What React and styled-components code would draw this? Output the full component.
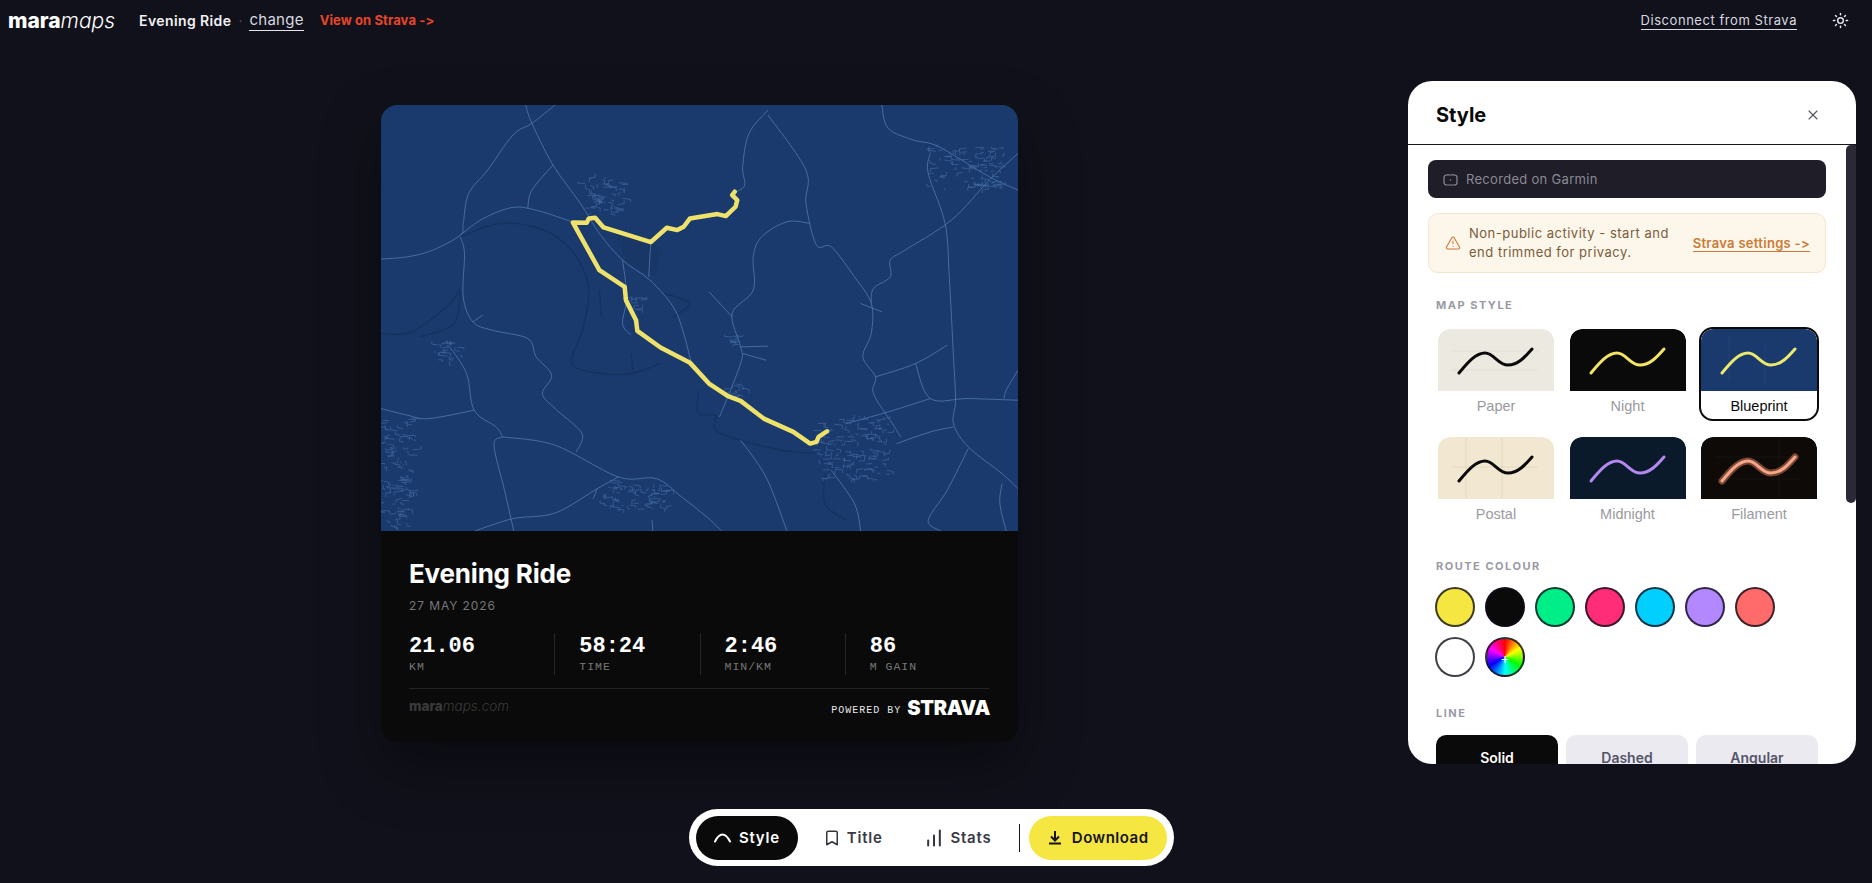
import React from "react";
import styled, { createGlobalStyle } from "styled-components";
import { Sun, X, Bookmark, ChartNoAxesColumnIncreasing, TriangleAlert } from "lucide-react";

const GlobalStyle = createGlobalStyle`
  html, body {
    margin: 0;
    background: #10111a;
    font-family: Inter, "Noto Sans", sans-serif;
    font-feature-settings: "liga" 0, "calt" 0;
  }
  * { box-sizing: border-box; }
`;

// map drawing, coordinates traced off the reference
const ROADS = [
  "370,45 385,100 435,225 500,340 545,430 600,510 665,570 720,650 745,730 765,830",
  "440,45 385,100 340,135 280,240 235,310 222,400 215,435 150,480 90,500 27,507",
  "215,435 270,385 340,352 400,362 480,395",
  "435,225 385,300 375,355",
  "215,440 225,490 222,620 245,695 290,720 375,745 395,800 432,855 410,910 440,955 495,1015 505,1045 490,1085",
  "245,695 268,675",
  "190,770 230,850 248,960 300,1010 315,1040",
  "27,955 90,975 140,985 248,960",
  "315,1040 295,1065 320,1200 342,1322",
  "315,1040 440,1065 590,1160 680,1165 740,1220 800,1280 835,1322",
  "250,1322 340,1285 440,1268 540,1195 590,1160",
  "945,60 900,130 885,230 890,285 870,305",
  "945,75 1035,240 1035,340 1060,465 1095,470 1150,560 1190,640 1190,730 1170,800 1200,860 1195,910 1240,1000 1260,1040",
  "1215,45 1230,115 1290,150 1350,170 1470,260 1538,300",
  "1538,190 1470,270 1380,390 1270,480 1235,510 1235,560 1195,595 1190,640",
  "1330,190 1325,250 1365,400 1375,560 1385,800 1390,930 1385,1000 1420,1070 1500,1150 1538,1195",
  "1045,400 990,395 930,440 910,500 910,600 860,670 880,770 880,820 830,980",
  "805,605 860,680",
  "1200,860 1295,820 1370,765",
  "1295,820 1330,925 1420,925 1538,930",
  "1130,1000 1230,965 1330,925",
  "1420,1075 1370,1200 1325,1290 1355,1322",
  "1500,1180 1495,1240 1510,1322",
  "1250,1060 1330,1025 1385,1010",
  "1095,1140 1150,1240 1165,1322",
  "880,1050 940,1160 990,1322",
  "667,456 662,560",
  "600,510 610,620 600,700 620,735",
  "880,770 945,768",
  "885,790 940,810",
  "1538,840 1510,900 1505,925",
  "1165,640 1215,665",
  "540,1195 530,1225",
  "670,1290 672,1322",
];

const RIVERS = [
  "27,730 100,725 190,640 215,590",
  "120,740 200,700 215,600",
  "215,440 290,405 350,400 430,430 490,500 520,600 505,720 480,820 550,850 620,850 690,820",
  "620,790 625,840",
  "780,900 780,970 820,975 820,1020 880,1050 980,1080 1060,1090",
  "1080,1150 1080,1240 1130,1290",
  "545,600 550,680",
  "700,610 760,640 720,680",
];

const VILLAGES = [
  [1330, 170, 170, 130],
  [30, 980, 75, 340],
  [1070, 980, 160, 190],
  [550, 1170, 170, 90],
  [510, 260, 95, 120],
  [155, 755, 60, 60],
  [605, 620, 45, 40],
  [850, 880, 35, 40],
  [855, 735, 25, 30],
];

// catmull-rom through the traced points so the roads bend instead of kinking
const smooth = (str) => {
  const pts = str.split(" ").map((p) => p.split(",").map(Number));
  let d = `M${pts[0][0]} ${pts[0][1]}`;
  for (let i = 0; i < pts.length - 1; i++) {
    const a = pts[i - 1] || pts[i];
    const b = pts[i];
    const c = pts[i + 1];
    const e = pts[i + 2] || c;
    const c1 = [b[0] + (c[0] - a[0]) / 6, b[1] + (c[1] - a[1]) / 6];
    const c2 = [c[0] - (e[0] - b[0]) / 6, c[1] - (e[1] - b[1]) / 6];
    d += `C${c1[0]} ${c1[1]} ${c2[0]} ${c2[1]} ${c[0]} ${c[1]}`;
  }
  return d;
};

// small street blobs, seeded so every run draws the same
const makeStreets = () => {
  let seed = 7;
  const rnd = () => {
    seed = (seed * 16807) % 2147483647;
    return seed / 2147483647;
  };
  const out = [];
  VILLAGES.forEach(([x, y, w, h]) => {
    const count = Math.round((w * h) / 240) + 8;
    for (let i = 0; i < count; i++) {
      const px = x + rnd() * w;
      const py = y + rnd() * h;
      const dx = (rnd() - 0.5) * 40;
      const dy = (rnd() - 0.5) * 30;
      out.push(`${px},${py} ${px + dx},${py + dy * 0.2} ${px + dx},${py + dy}`);
    }
  });
  return out;
};
const STREETS = makeStreets();

const ROUTE =
  "866,305 860,315 872,330 868,350 845,378 825,372 760,385 745,410 730,420 705,413 667,456 555,412 535,383 520,385 515,398 482,397 545,540 605,590 608,630 632,690 635,722 690,772 760,818 805,880 850,918 880,932 935,985 1005,1025 1045,1060 1060,1055 1065,1040 1085,1023";

const MAP_STYLES = [
  { name: "Paper", bg: "#ece9e1", line: "#0a0a0a", grid: "M14 22H100M14 41H100", gridColor: "rgba(0,0,0,.05)" },
  { name: "Night", bg: "#0a0a0a", line: "#f2e566" },
  { name: "Blueprint", bg: "#1a3a6e", line: "#ecea6c", grid: "M28 8V50M64 16V56", gridColor: "rgba(255,255,255,.06)", active: true },
  { name: "Postal", bg: "#f2e8d2", line: "#0a0a0a", grid: "M28 0V62M64 0V62M14 30H100", gridColor: "rgba(120,90,40,.12)" },
  { name: "Midnight", bg: "#0b1a2b", line: "#b388f0" },
  { name: "Filament", bg: "#0e0a08", line: "#f3a88c", glow: "#7d4632", grid: "M14 20H100M14 42H100M78 0V62", gridColor: "rgba(255,255,255,.05)" },
];

const COLOURS = ["#f5e642", "#0a0a0a", "#00ee88", "#ff2d78", "#00cfff", "#b388ff", "#ff6b6b", "#ffffff"];

const STATS = [
  ["21.06", "KM"],
  ["58:24", "TIME"],
  ["2:46", "MIN/KM"],
  ["86", "M GAIN"],
];

const CURVE = "M21 44C30 33 38 24 47 24C56 24 60 36 70 36C80 36 87 28 94 20";

export default function App() {
  return (
    <Page>
      <GlobalStyle />
      <TopBar>
        <TopGroup>
          <Logo>
            <b>mara</b>
            <i>maps</i>
          </Logo>
          <ActivityName>Evening Ride</ActivityName>
          <Dot>·</Dot>
          <ChangeLink>change</ChangeLink>
          <StravaLink>View on Strava -&gt;</StravaLink>
        </TopGroup>
        <TopRight>
          <DisconnectLink>Disconnect from Strava</DisconnectLink>
          <Sun size={17} strokeWidth={2} color="#e8e8ee" />
        </TopRight>
      </TopBar>

      <Workspace>
        <Card>
          <MapArea viewBox="27 45 1511 1277" preserveAspectRatio="none">
            <polygon points="585,430 690,470 680,560 610,520" fill="#183666" />
            {RIVERS.map((p, i) => (
              <path key={i} d={smooth(p)} fill="none" stroke="#16325f" strokeWidth="1.5" />
            ))}
            {ROADS.map((p, i) => (
              <path key={i} d={smooth(p)} fill="none" stroke="#5079ae" strokeWidth="0.8" />
            ))}
            {STREETS.map((p, i) => (
              <polyline key={i} points={p} fill="none" stroke="#446ba2" strokeWidth="0.6" />
            ))}
            <polyline
              points={ROUTE}
              fill="none"
              stroke="#efe26a"
              strokeWidth="4.5"
              strokeLinejoin="round"
              strokeLinecap="round"
            />
          </MapArea>
          <CardInfo>
            <CardTitle>Evening Ride</CardTitle>
            <CardDate>27 MAY 2026</CardDate>
            <StatGrid>
              {STATS.map(([value, label]) => (
                <Stat key={label}>
                  <StatValue>{value}</StatValue>
                  <StatLabel>{label}</StatLabel>
                </Stat>
              ))}
            </StatGrid>
            <CardFooter>
              <Credit>
                <b>mara</b>
                <i>maps.com</i>
              </Credit>
              <Powered>
                <PoweredText>POWERED BY</PoweredText>
                <StravaMark>STRAVA</StravaMark>
              </Powered>
            </CardFooter>
          </CardInfo>
        </Card>

        <Panel>
          <PanelHeader>
            <PanelTitle>Style</PanelTitle>
            <X size={16} strokeWidth={1.6} color="#55555f" />
          </PanelHeader>
          <PanelBody>
            <PanelContent>
              <DeviceBar>
                <svg width="15" height="13" viewBox="0 0 15 13" fill="none" stroke="#8a8a94" strokeWidth="1.2">
                  <rect x="1" y="2" width="13" height="10" rx="2.5" />
                  <path d="M5 2V1M10 2V1" />
                  <circle cx="7.5" cy="7" r="0.8" fill="#8a8a94" stroke="none" />
                </svg>
                Recorded on Garmin
              </DeviceBar>
              <Notice>
                <TriangleAlert size={16} strokeWidth={1.6} color="#d0763a" />
                <NoticeText>
                  Non-public activity - start and
                  <br />
                  end trimmed for privacy.
                </NoticeText>
                <NoticeLink>Strava settings -&gt;</NoticeLink>
              </Notice>

              <SectionLabel $top={22}>MAP STYLE</SectionLabel>
              <StyleGrid>
                {MAP_STYLES.map((s) => (
                  <StyleCard key={s.name} $active={s.active}>
                    <Thumb viewBox="0 0 116 62" style={{ background: s.bg }}>
                      {s.grid && <path d={s.grid} stroke={s.gridColor} strokeWidth="0.8" />}
                      {s.glow && <path d={CURVE} fill="none" stroke={s.glow} strokeWidth="7" strokeLinecap="round" />}
                      <path d={CURVE} fill="none" stroke={s.line} strokeWidth="3" strokeLinecap="round" />
                    </Thumb>
                    <StyleName $active={s.active}>{s.name}</StyleName>
                  </StyleCard>
                ))}
              </StyleGrid>

              <SectionLabel $top={27}>ROUTE COLOUR</SectionLabel>
              <Swatches>
                {COLOURS.map((c) => (
                  <Swatch key={c} style={{ background: c }} />
                ))}
                <CustomSwatch>+</CustomSwatch>
              </Swatches>

              <SectionLabel $top={26}>LINE</SectionLabel>
              <LineRow>
                <LineButton $active>Solid</LineButton>
                <LineButton>Dashed</LineButton>
                <LineButton>Angular</LineButton>
              </LineRow>
            </PanelContent>
            <ScrollThumb />
          </PanelBody>
        </Panel>
      </Workspace>

      <ToolbarRow>
        <Toolbar>
          <ToolButton $active $left={18} $right={18}>
            <svg width="17" height="10" viewBox="0 0 17 10" fill="none" stroke="#fff" strokeWidth="2" strokeLinecap="round">
              <path d="M1 8.500C3.500 3.500 6 1.500 8.500 1.500C11 1.500 13.500 3.500 16 8.500" />
            </svg>
            Style
          </ToolButton>
          <ToolButton $left={25} $right={20} $gap={6}>
            <Bookmark size={18} strokeWidth={2} color="#33333d" />
            Title
          </ToolButton>
          <ToolButton $left={21} $right={20} $gap={7}>
            <ChartNoAxesColumnIncreasing size={20} strokeWidth={2.4} color="#33333d" />
            Stats
          </ToolButton>
          <ToolDivider />
          <DownloadButton>
            <svg width="14" height="15" viewBox="0 0 14 15" fill="none" stroke="#15151a" strokeWidth="2">
              <path d="M7 1V10M3 6.500L7 10.500L11 6.500M1 13.500H13" />
            </svg>
            Download
          </DownloadButton>
        </Toolbar>
      </ToolbarRow>
    </Page>
  );
}

const Page = styled.div`
  width: 100%;
  height: 883px;
  overflow: hidden;
  background: #10111a;
  display: flex;
  flex-direction: column;
`;

const TopBar = styled.header`
  height: 40px;
  flex: none;
  display: flex;
  align-items: center;
  justify-content: space-between;
  padding: 0 23px 0 8px;
`;

const TopGroup = styled.div`
  display: flex;
  align-items: center;
`;

const Logo = styled.div`
  font-size: 21px;
  color: #fff;
  width: 131px;
  letter-spacing: 0;
  b {
    font-weight: 800;
  }
  i {
    font-weight: 300;
  }
`;

const ActivityName = styled.span`
  font-size: 14px;
  font-weight: 600;
  color: #f0f0f4;
  letter-spacing: 0.4px;
`;

const Dot = styled.span`
  color: #55555f;
  font-size: 14px;
  margin: 0 7px;
`;

const ChangeLink = styled.a`
  font-size: 15px;
  color: #d8d8e0;
  letter-spacing: 0.25px;
  border-bottom: 1px solid #e4e4ea;
  padding-bottom: 1px;
  margin-right: 16px;
  margin-top: 1px;
`;

const StravaLink = styled.a`
  font-size: 13px;
  font-weight: 700;
  color: #e8452a;
  letter-spacing: 0.1px;
`;

const TopRight = styled.div`
  display: flex;
  align-items: center;
  gap: 35px;
`;

const DisconnectLink = styled.a`
  font-size: 13px;
  color: #d8d8e0;
  letter-spacing: 0.55px;
  border-bottom: 1px solid #d8d8e0;
  padding-bottom: 1px;
  margin-top: 1px;
`;

const Workspace = styled.main`
  height: 769px;
  flex: none;
  display: flex;
  align-items: flex-start;
  justify-content: space-between;
  padding: 0 16px 0 381px;
`;

const Card = styled.section`
  width: 637px;
  height: 637px;
  margin-top: 65px;
  border-radius: 16px;
  overflow: hidden;
  background: #0a0a0a;
  box-shadow: 0 24px 60px rgba(0, 0, 0, 0.35);
  display: flex;
  flex-direction: column;
`;

const MapArea = styled.svg`
  display: block;
  width: 100%;
  height: 426px;
  flex: none;
  background: #1a3a6e;
  path,
  polyline {
    vector-effect: non-scaling-stroke;
  }
`;

const CardInfo = styled.div`
  flex: 1;
  padding: 26px 28px 0;
  display: flex;
  flex-direction: column;
`;

const CardTitle = styled.h2`
  margin: 0;
  font-size: 26px;
  line-height: 34px;
  font-weight: 700;
  color: #fff;
  letter-spacing: -0.2px;
`;

const CardDate = styled.div`
  margin-top: 7px;
  font-size: 12px;
  line-height: 16px;
  color: #777;
  letter-spacing: 0.9px;
`;

const StatGrid = styled.div`
  margin-top: 19px;
  display: grid;
  grid-template-columns: repeat(4, 1fr);
  padding-bottom: 13px;
  border-bottom: 1px solid #222;
`;

const Stat = styled.div`
  height: 42px;
  padding-left: 24px;
  border-left: 1px solid #262626;
  &:first-child {
    padding-left: 0;
    border-left: none;
  }
`;

const StatValue = styled.div`
  font-family: "Liberation Mono", monospace;
  font-size: 22px;
  line-height: 27px;
  font-weight: 700;
  color: #fff;
`;

const StatLabel = styled.div`
  font-family: "Liberation Mono", monospace;
  font-size: 11.500px;
  line-height: 14px;
  color: #777;
  letter-spacing: 1px;
`;

const CardFooter = styled.div`
  display: flex;
  justify-content: space-between;
  align-items: center;
  padding-top: 9px;
`;

const Credit = styled.div`
  font-size: 13.500px;
  color: #3a3a3a;
  margin-top: -4px;
  b {
    font-weight: 800;
  }
  i {
    font-weight: 300;
  }
`;

const Powered = styled.div`
  display: flex;
  align-items: center;
  gap: 6px;
`;

const PoweredText = styled.span`
  font-family: "Liberation Mono", monospace;
  font-size: 10px;
  color: #e8e8e8;
  letter-spacing: 1px;
  margin-top: 4px;
`;

const StravaMark = styled.span`
  font-family: Inter, sans-serif;
  font-size: 20px;
  line-height: 20px;
  font-weight: 900;
  color: #fff;
  letter-spacing: -0.3px;
`;

const Panel = styled.aside`
  width: 448px;
  height: 683px;
  margin-top: 41px;
  border-radius: 24px;
  background: #fff;
  overflow: hidden;
  display: flex;
  flex-direction: column;
`;

const PanelHeader = styled.div`
  height: 64px;
  flex: none;
  display: flex;
  align-items: center;
  justify-content: space-between;
  padding: 4px 35px 0 28px;
  border-bottom: 1px solid #15151a;
`;

const PanelTitle = styled.h3`
  margin: 0;
  font-size: 20px;
  font-weight: 700;
  color: #0a0a0a;
`;

const PanelBody = styled.div`
  flex: 1;
  min-height: 0;
  display: flex;
  overflow: hidden;
`;

const PanelContent = styled.div`
  flex: 1;
  padding: 15px 20px 0;
`;

const ScrollThumb = styled.div`
  width: 10px;
  height: 358px;
  flex: none;
  background: #2a2935;
  border-radius: 5px 0 5px 5px;
`;

const DeviceBar = styled.div`
  height: 38px;
  border-radius: 8px;
  background: #1e1d28;
  color: #8a8a94;
  font-size: 13px;
  letter-spacing: 0.3px;
  display: flex;
  align-items: center;
  gap: 8px;
  padding: 0 15px;
`;

const Notice = styled.div`
  margin-top: 15px;
  height: 60px;
  border-radius: 10px;
  background: #fdf6ea;
  border: 1px solid #f1e6d0;
  display: flex;
  align-items: center;
  gap: 8px;
  padding: 0 15px 0 16px;
`;

const NoticeText = styled.div`
  flex: 1;
  font-size: 13px;
  line-height: 19px;
  color: #7a5c3a;
  letter-spacing: 0.5px;
`;

const NoticeLink = styled.a`
  font-size: 13px;
  font-weight: 600;
  color: #cc7a35;
  letter-spacing: 0.3px;
  border-bottom: 1px solid #cc7a35;
`;

const SectionLabel = styled.div`
  margin-top: ${(p) => p.$top}px;
  padding-left: 8px;
  font-size: 11px;
  line-height: 20px;
  font-weight: 700;
  color: #9a9aa5;
  letter-spacing: 1.5px;
`;

const StyleGrid = styled.div`
  margin-top: 12px;
  margin-left: 8px;
  width: 384px;
  display: grid;
  grid-template-columns: repeat(3, 120px);
  gap: 14px 11.500px;
`;

const StyleCard = styled.div`
  height: 94px;
  border: 2px solid ${(p) => (p.$active ? "#0a0a0a" : "transparent")};
  border-radius: 14px;
  overflow: hidden;
`;

const Thumb = styled.svg`
  display: block;
  width: 100%;
  height: 62px;
  border-radius: 12px 12px 0 0;
`;

const StyleName = styled.div`
  font-family: "Liberation Sans", Arial, sans-serif;
  font-size: 14.500px;
  line-height: 30px;
  text-align: center;
  color: ${(p) => (p.$active ? "#0a0a0a" : "#9a9aa0")};
`;

const Swatches = styled.div`
  margin-top: 11px;
  margin-left: 7px;
  display: flex;
  flex-wrap: wrap;
  gap: 10px;
  width: 360px;
`;

const Swatch = styled.div`
  width: 40px;
  height: 40px;
  border-radius: 50%;
  border: 2px solid rgba(15, 15, 25, 0.8);
`;

const CustomSwatch = styled(Swatch)`
  background: conic-gradient(#ff0000, #ffff00, #00ff00, #00ffff, #0000ff, #ff00ff, #ff0000);
  color: #fff;
  font-size: 14px;
  display: flex;
  align-items: center;
  justify-content: center;
`;

const LineRow = styled.div`
  margin-top: 12px;
  margin-left: 8px;
  display: flex;
  gap: 8px;
`;

const LineButton = styled.div`
  width: 122px;
  height: 44px;
  border-radius: 10px;
  background: ${(p) => (p.$active ? "#0a0a0a" : "#eaeaf0")};
  color: ${(p) => (p.$active ? "#fff" : "#55556a")};
  font-size: 14px;
  font-weight: 600;
  display: flex;
  align-items: center;
  justify-content: center;
`;

const ToolbarRow = styled.div`
  flex: none;
  display: flex;
  justify-content: center;
  padding-right: 9px;
`;

const Toolbar = styled.nav`
  width: 485px;
  height: 57px;
  border-radius: 29px;
  background: #fff;
  padding: 7px;
  display: flex;
  align-items: center;
`;

const ToolButton = styled.div`
  height: 44px;
  border-radius: 22px;
  padding: 0 ${(p) => p.$right}px 0 ${(p) => p.$left}px;
  background: ${(p) => (p.$active ? "#0a0a0a" : "transparent")};
  color: ${(p) => (p.$active ? "#fff" : "#3a3a45")};
  font-size: 15px;
  font-weight: 600;
  letter-spacing: 0.75px;
  display: flex;
  align-items: center;
  gap: ${(p) => p.$gap || 8}px;
`;

const ToolDivider = styled.div`
  width: 1px;
  height: 28px;
  background: #15151a;
  margin: 0 9px 0 8px;
`;

const DownloadButton = styled.div`
  width: 138px;
  height: 44px;
  border-radius: 22px;
  background: #f5e642;
  color: #15151a;
  font-size: 15px;
  font-weight: 600;
  letter-spacing: 0.5px;
  display: flex;
  align-items: center;
  justify-content: center;
  gap: 10px;
`;
